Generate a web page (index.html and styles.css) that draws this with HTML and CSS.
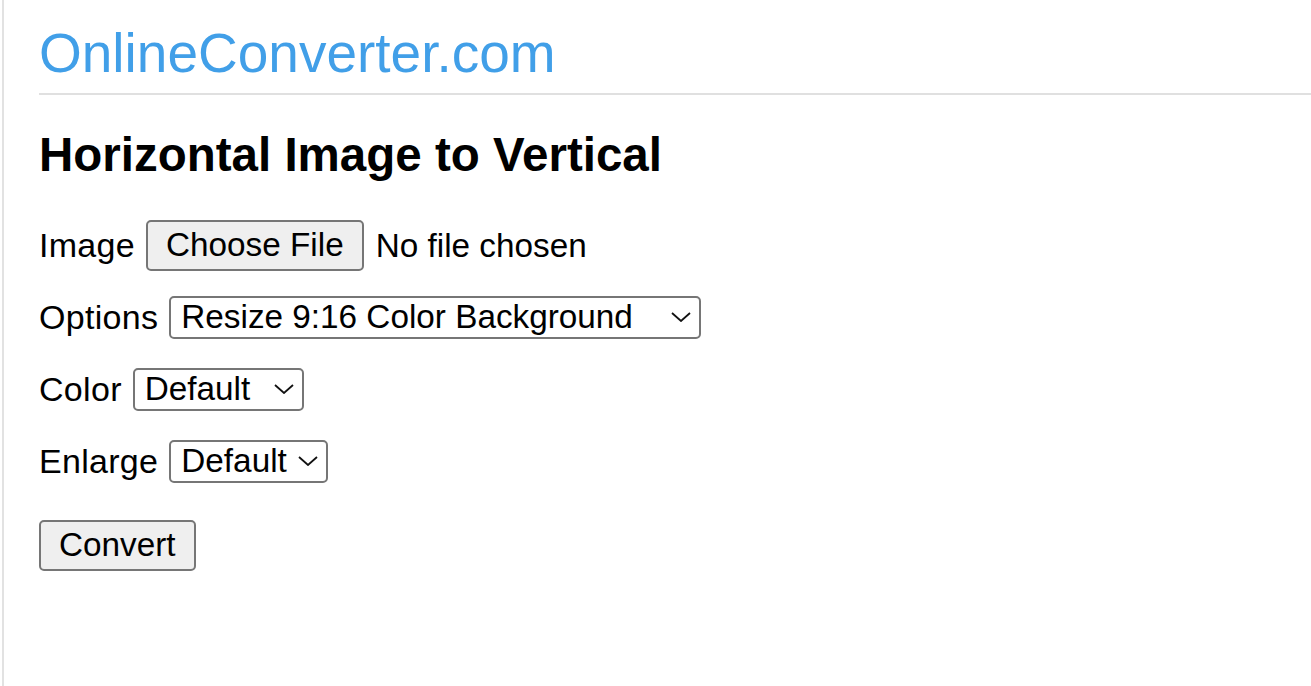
FILE: index.html
```html
<!DOCTYPE html>
<html lang="en">
<head>
<meta charset="utf-8">
<title>Horizontal Image to Vertical - OnlineConverter.com</title>
<link rel="stylesheet" href="styles.css">
</head>
<body>
<div class="page">
  <header class="site-header">
    <a class="logo" href="#">OnlineConverter.com</a>
  </header>
  <main class="content">
    <h1 class="title">Horizontal Image to Vertical</h1>
    <form class="form">
      <div class="row">
        <label class="label" for="file">Image</label>
        <input class="file" id="file" type="file">
      </div>
      <div class="row">
        <label class="label" for="options">Options</label>
        <span class="select-wrap">
          <select class="select select-options" id="options">
            <option>Resize 9:16 Color Background</option>
            <option>Resize 9:16 Blur Background</option>
            <option>Crop 9:16</option>
          </select>
          <svg class="chevron" viewBox="0 0 20 10" aria-hidden="true"><polyline points="1,1 10,9 19,1"/></svg>
        </span>
      </div>
      <div class="row">
        <label class="label" for="color">Color</label>
        <span class="select-wrap">
          <select class="select select-color" id="color">
            <option>Default</option>
            <option>White</option>
            <option>Black</option>
          </select>
          <svg class="chevron" viewBox="0 0 20 10" aria-hidden="true"><polyline points="1,1 10,9 19,1"/></svg>
        </span>
      </div>
      <div class="row">
        <label class="label" for="enlarge">Enlarge</label>
        <span class="select-wrap">
          <select class="select select-enlarge" id="enlarge">
            <option>Default</option>
            <option>Yes</option>
            <option>No</option>
          </select>
          <svg class="chevron" viewBox="0 0 20 10" aria-hidden="true"><polyline points="1,1 10,9 19,1"/></svg>
        </span>
      </div>
      <div class="row row-submit">
        <button class="btn" type="button">Convert</button>
      </div>
    </form>
  </main>
</div>
</body>
</html>
```

FILE: styles.css
```css
html, body {
  margin: 0;
  padding: 0;
  background: #fff;
}

body {
  font-family: "Liberation Sans", Arial, sans-serif;
  font-size: 33.3px;
  color: #000;
}

.page {
  margin-left: 2px;
  border-left: 2px solid #e2e2e2;
  min-height: 100vh;
  padding-left: 35px;
  box-sizing: border-box;
}

.site-header {
  padding-top: 22px;
  padding-bottom: 9px;
  border-bottom: 2px solid #e0e0e0;
}

.logo {
  display: block;
  font-size: 55px;
  line-height: 62px;
  color: #419fe8;
  text-decoration: none;
}

.content {
  padding-top: 33px;
}

.title {
  margin: 0 0 27px 0;
  font-size: 47.5px;
  line-height: 54px;
  font-weight: 700;
}

.form {
  display: flex;
  flex-direction: column;
}

.row {
  display: flex;
  align-items: center;
  gap: 11px;
  height: 72px;
}

.row-submit {
  margin-top: 12px;
}

.label {
  font-size: 34px;
  letter-spacing: 0.3px;
  line-height: 38px;
}

.file {
  font-family: "Liberation Sans", Arial, sans-serif;
  font-size: 33.3px;
  color: #000;
  width: 460px;
  margin: 0;
  padding: 0;
}

.file::file-selector-button,
.btn {
  font-family: "Liberation Sans", Arial, sans-serif;
  font-size: 33.3px;
  color: #000;
  background: #efefef;
  border: 2px solid #767676;
  border-radius: 5px;
  height: 51px;
  line-height: 38px;
  box-sizing: border-box;
}

.file::file-selector-button {
  padding: 0 18px;
  margin: 0 12px 0 0;
}

.btn {
  padding: 0 18px;
  margin: 0;
}

.select-wrap {
  position: relative;
  display: inline-flex;
}

.select {
  appearance: none;
  -webkit-appearance: none;
  font-family: "Liberation Sans", Arial, sans-serif;
  font-size: 33.3px;
  color: #000;
  background: #fff;
  border: 2px solid #767676;
  border-radius: 5px;
  height: 43px;
  line-height: 38px;
  padding: 0 36px 0 10px;
  margin: 0;
  box-sizing: border-box;
}

.select-options { width: 532px; }
.select-color { width: 171px; }
.select-enlarge { width: 159px; }

.chevron {
  position: absolute;
  right: 10px;
  top: 50%;
  width: 20px;
  height: 10px;
  margin-top: -5px;
  fill: none;
  stroke: #111;
  stroke-width: 1.8;
  pointer-events: none;
}
```
